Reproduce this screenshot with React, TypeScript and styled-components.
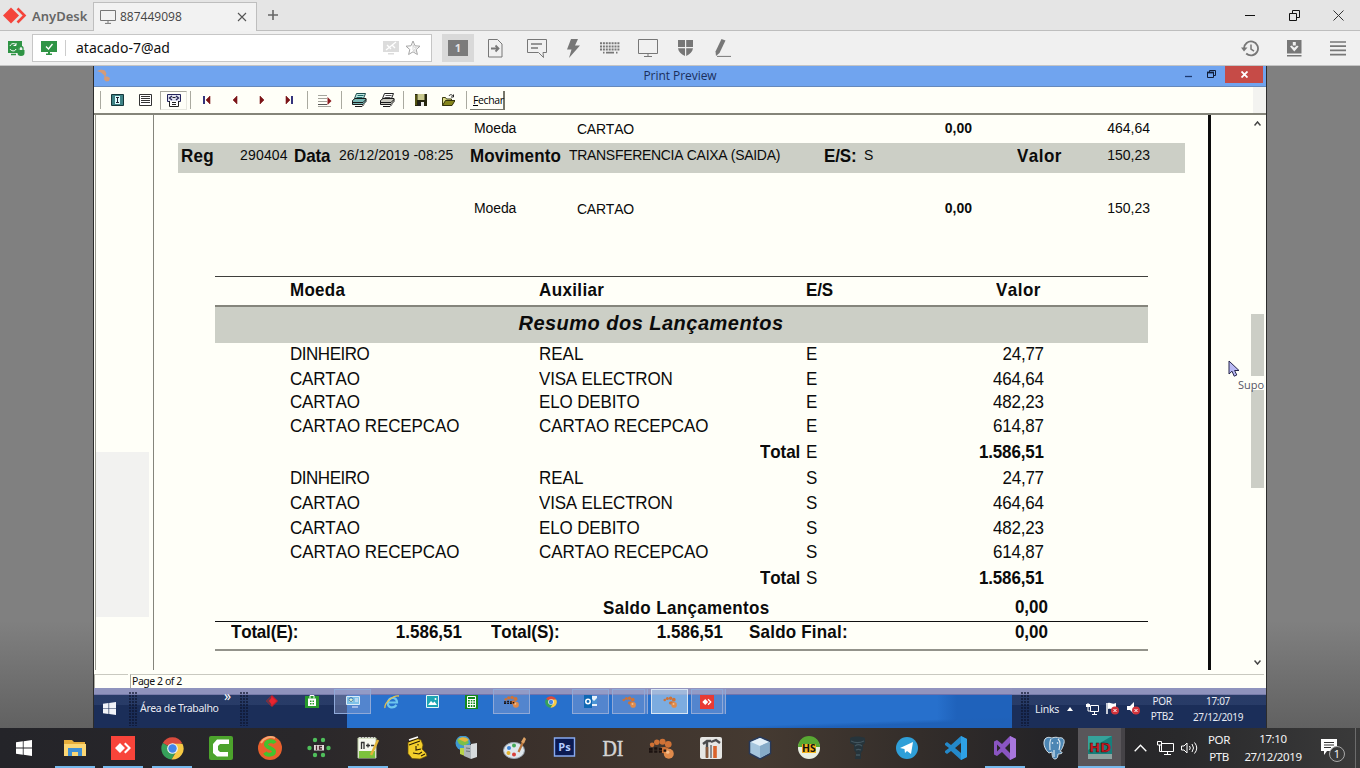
import React from "react";
import styled, { createGlobalStyle, css } from "styled-components";

const ui = `"Noto Sans", "Open Sans", sans-serif`;
const arial = `"Liberation Sans", Arial, sans-serif`;

const Global = createGlobalStyle`
  * { box-sizing: border-box; }
  body { margin: 0; background: #808080; overflow: hidden; }
  svg { display: block; flex: none; }
`;

const Screen = styled.div`
  width: 1360px;
  height: 768px;
  display: flex;
  flex-direction: column;
  overflow: hidden;
  font-family: ${ui};
  color: #222;
`;

/* ---------- AnyDesk chrome ---------- */
const TitleBar = styled.header`
  height: 31px;
  flex: none;
  display: flex;
  background: #e5e5e5;
  border-bottom: 1px solid #bebebe;
`;
const Brand = styled.div`
  width: 93px;
  display: flex;
  align-items: center;
  padding: 1px 0 0 3px;
  gap: 5px;
  font-size: 13px;
  font-weight: 600;
  color: #666;
  white-space: nowrap;
`;
const Tab = styled.div`
  width: 164px;
  height: 29px;
  margin-top: 2px;
  display: flex;
  align-items: center;
  padding: 0 9px 1px 6px;
  background: #f2f2f2;
  border: 1px solid #bebebe;
  border-bottom: 0;
  font: 12px "Open Sans", sans-serif;
  color: #444;
`;
const TabLabel = styled.span`
  flex: 1;
  margin-left: 4px;
`;
const NewTab = styled.div`
  width: 32px;
  display: flex;
  align-items: center;
  justify-content: center;
`;
const WindowButtons = styled.div`
  margin-left: auto;
  display: flex;
  align-items: center;
  gap: 33px;
  padding-right: 16px;
`;
const NavBar = styled.div`
  height: 35px;
  flex: none;
  display: flex;
  align-items: center;
  background: #f0f0f0;
  border-bottom: 1px solid #c4c4c4;
`;
const SessionIcon = styled.div`
  width: 32px;
  padding-left: 8px;
`;
const Address = styled.div`
  width: 400px;
  height: 28px;
  display: flex;
  align-items: center;
  background: #fff;
  border: 1px solid #c6c6c6;
  padding: 0 10px 0 8px;
  gap: 6px;
`;
const AddressText = styled.span`
  flex: 1;
  border-left: 1px solid #ccc;
  margin-left: 2px;
  padding-left: 10px;
  line-height: 16px;
  font-size: 14px;
  color: #111;
`;
const Actions = styled.div`
  display: flex;
  align-items: center;
  margin-left: 10px;
`;
const Action = styled.div<{ $w: number; $on?: boolean }>`
  width: ${(p) => p.$w}px;
  height: 28px;
  display: flex;
  align-items: center;
  justify-content: center;
  background: ${(p) => (p.$on ? "#d9d9d9" : "none")};
`;
const MonitorBadge = styled.span`
  width: 20px;
  height: 16px;
  background: #7b7b7b;
  color: #e4e4e4;
  font-size: 11px;
  font-weight: 700;
  line-height: 16px;
  text-align: center;
`;
const RightActions = styled.div`
  margin-left: auto;
  display: flex;
  align-items: center;
  gap: 28px;
  padding-right: 14px;
`;

/* ---------- Remote desktop ---------- */
const Stage = styled.main`
  height: 662px;
  flex: none;
  display: flex;
  padding-left: 93px;
  background: linear-gradient(#808080 0, #808080 555px, #616161 662px);
`;
const Remote = styled.div`
  position: relative;
  width: 1174px;
  border: solid #2c2c2c;
  border-width: 0 1px;
  display: flex;
  flex-direction: column;
  background: #fffff8;
`;
const AppTitle = styled.div`
  height: 21px;
  flex: none;
  display: flex;
  background: #70a4ef;
  border-bottom: 1px solid #6689bb;
  padding: 0 3px 0 2px;
`;
const AppTitleText = styled.div`
  flex: 1;
  padding-left: 86px;
  text-align: center;
  font: 12px/20px "Open Sans", sans-serif;
  letter-spacing: -0.05px;
  color: #1b2f5c;
`;
const AppTitleButtons = styled.div`
  display: flex;
  align-items: flex-start;
`;
const AppClose = styled.div`
  width: 38px;
  height: 17px;
  display: flex;
  align-items: center;
  justify-content: center;
  background: #c64b47;
`;
const ToolRow = styled.div`
  height: 28px;
  flex: none;
  display: flex;
  align-items: center;
  border-bottom: 2px solid #85857a;
  padding-left: 6px;
`;
const ToolSep = styled.i`
  width: 1px;
  height: 18px;
  background: #aaaaa0;
`;
const Tool = styled.div<{ $w: number; $pressed?: boolean }>`
  width: ${(p) => p.$w}px;
  height: 19px;
  display: flex;
  align-items: center;
  justify-content: center;
  ${(p) =>
    p.$pressed &&
    css`
      border: 1px solid #aaaaa0;
      border-right-color: #e8e8e0;
      border-bottom-color: #e8e8e0;
    `}
`;
const Gap = styled.i<{ $w: number }>`
  width: ${(p) => p.$w}px;
  flex: none;
`;
const CloseButton = styled.div`
  width: 35px;
  height: 19px;
  margin-left: 3px;
  border-right: 2px solid #77776a;
  border-bottom: 1px solid #77776a;
  font: 10.5px/19px "Open Sans", sans-serif;
  letter-spacing: -0.4px;
  padding-left: 3px;
  color: #000;
  white-space: nowrap;
`;
const ScrollCorner = styled.div`
  width: 13px;
  height: 26px;
  margin-left: auto;
  background: #f3f3f0;
`;

const Viewport = styled.div`
  height: 555px;
  flex: none;
  display: flex;
  margin-left: 1px;
  border-left: 1px solid #999990;
`;
const Gutter = styled.div`
  width: 57px;
  padding-top: 337px;
`;
const GutterPanel = styled.div`
  width: 53px;
  height: 165px;
  background: #f2f2f0;
`;
const Paper = styled.section`
  width: 1058px;
  border-left: 1px solid #85857c;
  border-right: 3px solid #0c0c0c;
  font-family: ${arial};
  color: #0b0b0b;
`;
const ScrollBar = styled.div`
  flex: 1;
  display: flex;
  flex-direction: column;
  align-items: flex-end;
  padding: 4px 2px 3px 0;
`;
const ScrollArrow = styled.div`
  width: 14px;
  height: 9px;
  display: flex;
  align-items: center;
  justify-content: center;
`;
const Thumb = styled.div`
  width: 13px;
  height: 174px;
  margin: 186px 0 auto;
  background: linear-gradient(#cccec6 0 62px, #fffff8 62px 76px, #cccec6 76px);
`;

const Detail = styled.div<{ $h: number }>`
  height: ${(p) => p.$h}px;
  display: grid;
  grid-template-columns: 103px 268px 127px 178px;
  padding-left: 320px;
  line-height: 26px;
`;
const RecordBand = styled.div`
  height: 30px;
  width: 1007px;
  margin-left: 24px;
  padding-left: 3px;
  display: grid;
  grid-template-columns: 59px 54px 45px 131px 99px 255px 40px 153px 50px 83px;
  background: #cccfc6;
  line-height: 26px;
  white-space: nowrap;
`;
const BlankBand = styled.div`
  height: 22px;
`;
/* The report face is slightly condensed, so each text is set larger and squeezed. */
const Txt = styled.span<{ $b?: boolean; $s?: number; $ls?: number; $right?: boolean; $dy?: number }>`
  font-weight: ${(p) => (p.$b ? 700 : 400)};
  font-size: ${(p) => (p.$s ?? 17) * 1.06}px;
  letter-spacing: ${(p) => p.$ls ?? 0}px;
  text-align: ${(p) => (p.$right ? "right" : "left")};
  margin-top: ${(p) => p.$dy ?? 0}px;
  transform: scaleX(0.9434);
  transform-origin: ${(p) => (p.$right ? "100% 50%" : "0 50%")};
  font-kerning: none;
  white-space: nowrap;
`;
const Summary = styled.div`
  width: 933px;
  margin: 43px 0 0 61px;
  border-top: 1px solid #3f3f3c;
`;
const SummaryRow = styled.div<{ $h: number }>`
  height: ${(p) => p.$h}px;
  display: grid;
  grid-template-columns: 249px 221px 46px 190px 48px;
  padding-left: 75px;
  line-height: 22px;
`;
const SummaryHead = styled(SummaryRow)`
  grid-template-columns: 249px 267px 190px 48px;
  border-bottom: 2px solid #85857c;
  line-height: 27px;
`;
const SummaryTitle = styled.div`
  height: 36px;
  padding-right: 61px;
  background: #cccfc6;
  font: italic 700 20px/33px ${arial};
  letter-spacing: 0.48px;
  text-align: center;
`;
const BalanceRow = styled.div`
  height: 24px;
  display: grid;
  grid-template-columns: 300px 145px;
  padding-left: 388px;
  line-height: 22px;
`;
const TotalsRow = styled.div`
  height: 30px;
  display: grid;
  grid-template-columns: 130px 101px 29px 130px 102px 26px 150px 149px;
  padding-left: 16px;
  border-top: 1px solid #111;
  border-bottom: 2px solid #93938b;
  line-height: 21px;
`;

const StatusBar = styled.div`
  height: 18px;
  flex: none;
  display: flex;
  padding-top: 4px;
  background: #fffff8;
`;
const StatusCell = styled.div<{ $w?: number }>`
  ${(p) => (p.$w ? `width: ${p.$w}px;` : "flex: 1;")}
  margin-right: 2px;
  border-top: 1px solid #c9c9c0;
  border-left: 1px solid #aaaaa2;
  padding-left: 1px;
  font: 10.5px/13px "Noto Sans", sans-serif;
  letter-spacing: -0.45px;
  color: #111;
`;

const RemoteTaskbar = styled.div`
  height: 40px;
  flex: none;
  display: flex;
  background: linear-gradient(#8f93bd 0 6px, #777baa 6px 7px, rgba(60, 80, 125, 0.4) 7px 17px, transparent 17px),
    linear-gradient(#1b2e59, #1b2e59);
  color: #e8ebf3;
  font-size: 11px;
`;
const RemoteStart = styled.div`
  width: 35px;
  padding: 14px 0 0 9px;
`;
const Grip = styled.i<{ $ml?: number }>`
  width: 8px;
  height: 34px;
  margin: 4px 0 0 ${(p) => p.$ml ?? 0}px;
  background: radial-gradient(circle at 1px 1px, #0c142c 0.6px, transparent 0.9px) 0 0 / 3px 3px;
`;
const DeskLabel = styled.div`
  width: 81px;
  padding-left: 3px;
  font-size: 10.5px;
  line-height: 40px;
  letter-spacing: -0.32px;
  white-space: nowrap;
`;
const More = styled.div`
  width: 23px;
  padding-left: 6px;
  font-size: 14px;
  line-height: 15px;
  color: #fff;
`;
const RemoteIcons = styled.div`
  width: 99px;
  height: 26px;
  display: flex;
  align-items: center;
  gap: 26px;
  padding-left: 17px;
`;
const RemoteApps = styled.div`
  width: 665px;
  display: flex;
  align-items: flex-start;
  background: linear-gradient(#9294be 0 6px, #7073ae 6px 7px, transparent 7px),
    linear-gradient(178deg, transparent 0 82%, #1f61b8 88%),
    linear-gradient(90deg, #2770cc 0 590px, #1f62bb 610px);
`;
const RemoteApp = styled.div<{ $w: number; $kind?: "open" | "active"; $pull?: boolean }>`
  width: ${(p) => p.$w}px;
  height: 25px;
  margin: 1px 0 0 ${(p) => (p.$pull ? -13 : 0)}px;
  display: flex;
  align-items: center;
  justify-content: center;
  ${(p) =>
    p.$kind &&
    css`
      border: 1px solid ${p.$kind === "active" ? "#d7e5f4" : "#8fa9d8"};
      background: ${p.$kind === "active" ? "rgba(170,205,235,.65)" : "rgba(150,165,210,.4)"};
    `}
`;
const StackEdge = styled.i`
  width: 3px;
  height: 25px;
  margin: 1px 3px 0 0;
  border-right: 1px solid #8fa9d8;
  background: rgba(150, 165, 210, 0.4);
`;
const RemoteTray = styled.div`
  flex: 1;
  display: flex;
  align-items: center;
  padding: 1px 0 0 6px;
  font-size: 10.5px;
`;
const Clock = styled.div<{ $w: number; $lh: number; $s: number; $ls?: number }>`
  width: ${(p) => p.$w}px;
  text-align: center;
  font-size: ${(p) => p.$s}px;
  line-height: ${(p) => p.$lh}px;
  letter-spacing: ${(p) => p.$ls ?? -0.3}px;
  white-space: nowrap;
`;
const Pointer = styled.div`
  position: absolute;
  left: 1134px;
  top: 294px;
`;
const PointerLabel = styled.div`
  position: absolute;
  left: 1144px;
  top: 311px;
  width: 28px;
  overflow: hidden;
  font: 11px/16px "Open Sans", sans-serif;
  color: #555566;
`;

/* ---------- Host taskbar ---------- */
const Taskbar = styled.footer`
  height: 40px;
  flex: none;
  display: flex;
  background: linear-gradient(90deg, #242429 0, #29272a 300px, #3a302b 520px, #453a31 760px, #332d2a 920px, #252427 1040px, #29292b 1180px, #3a3a3a 1360px);
  color: #f4f4f4;
`;
const StartSlot = styled.div`
  width: 50px;
  display: flex;
  align-items: center;
  padding-left: 16px;
`;
const Slot = styled.div<{ $run?: boolean; $active?: boolean }>`
  width: 49px;
  margin-right: -0.05px;
  display: flex;
  flex: none;
  align-items: center;
  justify-content: center;
  ${(p) =>
    p.$active &&
    css`
      width: 47px;
      background: linear-gradient(90deg, #59565a 43px, #454347 43px);
      padding-right: 3px;
      border-bottom: 2px solid #76b9ed;
    `}
  ${(p) =>
    p.$run &&
    css`
      background: linear-gradient(#76b9ed, #76b9ed) 50% 100% / 40px 2px no-repeat;
    `}
`;
const HostTray = styled.div<{ $ml?: number }>`
  display: flex;
  align-items: center;
  margin-left: ${(p) => p.$ml ?? 0}px;
`;
const TrayIcon = styled.div<{ $w: number }>`
  width: ${(p) => p.$w}px;
`;
const Notice = styled.div`
  padding-top: 5px;
`;
const PeekEdge = styled.i`
  width: 1px;
  height: 40px;
  margin: 0 4px 0 auto;
  background: #6c6c6c;
`;

/* ---------- Drawings ---------- */
type SP = { w: number; h: number; vb?: string; children: React.ReactNode };
const S = ({ w, h, vb, children }: SP) => (
  <svg width={w} height={h} viewBox={vb ?? `0 0 ${w} ${h}`} fill="none">
    {children}
  </svg>
);
const Monitor = ({ w = 16, h = 14, c = "#777" }: { w?: number; h?: number; c?: string }) => (
  <S w={w} h={h} vb="0 0 16 14">
    <path d="M.5.5h15v10H.5zM8 10.5v2.5M5 13.4h6" stroke={c} />
  </S>
);
const WinLogo = ({ s, c = "#fff" }: { s: number; c?: string }) => (
  <S w={s} h={s} vb="0 0 16 16">
    <path d="M0 2.3 6.8 1.3v6.3H0zM7.6 1.2 16 0v7.6H7.6zM0 8.4h6.8v6.3L0 13.7zM7.6 8.4H16V16l-8.4-1.2z" fill={c} />
  </S>
);
const Chrome = ({ s }: { s: number }) => (
  <S w={s} h={s} vb="0 0 24 24">
    <path d="M12 12 1.9 6.2A11.5 11.5 0 0 1 22 6.2z" fill="#d94b3d" />
    <path d="M12 12 1.9 6.2A11.5 11.5 0 0 0 11 23.5l5-9z" fill="#36a05a" />
    <path d="M12 7h10.4A11.5 11.5 0 0 1 11 23.5l5.3-9z" fill="#f6c944" />
    <circle cx="12" cy="12" r="5.6" fill="#f2f2f2" />
    <circle cx="12" cy="12" r="4.4" fill="#4285e8" />
  </S>
);
const AnyMark = ({ s, bg }: { s: number; bg: string }) => (
  <S w={s} h={s} vb="0 0 24 24">
    <path d="M0 0h24v24H0z" fill={bg} />
    <path d="m9 7 5 5-5 5-5-5zM13 8l1.500-1.500L20 12l-5.500 5.500L13 16l4-4z" fill="#fff" />
  </S>
);
const Foot = ({ s, dark }: { s: number; dark?: boolean }) => (
  <S w={s} h={s} vb="0 0 24 24">
    <g fill="#cf7236">
      <circle cx="3" cy="8.500" r="2.200" />
      <circle cx="7.500" cy="6" r="2.600" />
      <circle cx="13" cy="5.500" r="2.900" />
      <circle cx="18.500" cy="8" r="3.200" />
      <ellipse cx="14.500" cy="13.500" rx="4.500" ry="3" />
    </g>
    <circle cx="19" cy="17" r="4.800" fill="#df8a4b" />
    <circle cx="18" cy="15.500" r="1.600" fill="#f3bd8c" />
    {dark && <path d="M0 12.500h3.500M0 15h3.500M5 12h3M5 15h3M9.500 12.500h3M9.500 15h3M14 14h2.500" stroke="#1b1210" strokeWidth="2.200" />}
  </S>
);
const Arrow = ({ dir, bar }: { dir: 1 | -1; bar?: boolean }) => (
  <S w={11} h={10}>
    <g transform={dir === 1 ? undefined : "translate(11 0) scale(-1 1)"}>
      <path d="M3 1v8l4-4z" fill="#7c1518" stroke="#7c1518" strokeWidth=".6" />
      {bar && <path d="M9 1v8" stroke="#1d1d6e" strokeWidth="1.800" />}
    </g>
  </S>
);
const Printer = ({ teal }: { teal?: boolean }) => (
  <S w={15} h={14}>
    <path d="M4.500.500h9l-2 5h-9z" fill={teal ? "#bfe6e2" : "#fff"} stroke={teal ? "#1d4d4c" : "#222"} />
    <path d="M5.500 2.500h6M4.500 4.500h6" stroke={teal ? "#1d6a68" : "#555"} />
    <path d="m.500 7.500 2.500-2h11v3l-3 3H.500z" fill={teal ? "#79b8b4" : "#c8c8be"} stroke="#1a1a1a" />
    <path d="M1 9.500h10l3-3M3 13.500h7l2-2" stroke="#1a1a1a" />
  </S>
);

const hostApps: { run?: boolean; icon: React.ReactNode }[] = [
  {
    run: true,
    icon: (
      <S w={24} h={24}>
        <path d="M1 4h8l2 2h11v14H1z" fill="#e6ae3c" />
        <path d="M1 8h22v12H1z" fill="#fbd774" />
        <path d="M5 12h14v8h-4v-4H9v4H5z" fill="#3f8fd4" />
      </S>
    ),
  },
  { run: true, icon: <AnyMark s={24} bg="#f8443a" /> },
  { run: true, icon: <Chrome s={23} /> },
  {
    icon: (
      <S w={24} h={24}>
        <rect width="24" height="24" rx="2" fill="#4ca32c" />
        <path d="M20 3.500V8h-9l-2 2v4l2 2h8v4.500H8L4 17V8l4-4.500z" fill="#fff" />
      </S>
    ),
  },
  {
    icon: (
      <S w={24} h={24}>
        <circle cx="12" cy="12" r="12" fill="#e8602c" />
        <path d="M3 7a11 11 0 0 1 14-5" stroke="#f7a873" strokeWidth="2" />
        <path d="M17 7c-2-3-9-2-9 1.500S16 12 16 15.500 9 20 7 16.500" stroke="#43c22d" strokeWidth="4" />
      </S>
    ),
  },
  {
    icon: (
      <S w={24} h={24}>
        <g fill="#4fbf5b">
          <circle cx="8" cy="4" r="2.200" /><circle cx="16" cy="4" r="2.200" />
          <circle cx="2.500" cy="12" r="2.200" /><circle cx="21.500" cy="12" r="2.200" />
          <circle cx="8" cy="19" r="2.200" /><circle cx="16" cy="19" r="2.200" />
        </g>
        <path d="M7 9h10v5.500H7z" fill="#e5dcdc" />
        <path d="M9.500 9.500V14M15 10.500h-2.500V13H15" stroke="#4b2c34" strokeWidth="1.300" />
      </S>
    ),
  },
  {
    run: true,
    icon: (
      <S w={24} h={24}>
        <path d="M2 2h18v20H2z" fill="#f6f8ee" stroke="#b9c9a4" />
        <path d="M3 15h16v7H3z" fill="#7cc33c" />
        <path d="M5.500 6v7M5 6.500h3V13M10 9.500h4M12 7.500v4M15 9.500h3" stroke="#333" strokeWidth="1.300" />
        <path d="M22 4 15 19" stroke="#e3b53a" strokeWidth="2.500" />
        <path d="M3 1.500h16" stroke="#ccc" strokeDasharray="2 1" />
      </S>
    ),
  },
  {
    icon: (
      <S w={24} h={24}>
        <path d="m3 6 8-4 5 2 2 5-1 4 4 4 1 3-7 3-8-.500-4-5V11z" fill="#f4cf2b" stroke="#6b5208" strokeWidth=".7" />
        <path d="m3 6 10-3.500M4 9l11-4M11 10v4l5-1M8 17l6 1 3-2M13 8v1.500M16 20l4-2" stroke="#2a1e06" strokeWidth="1.100" />
        <path d="m4 4 9-3" stroke="#fff" strokeWidth="1.600" />
      </S>
    ),
  },
  {
    icon: (
      <S w={24} h={24}>
        <circle cx="9" cy="7" r="7.500" fill="#3e98d2" />
        <path d="M3 4c4-3 7 1 10-1l2 4-5 3-5-2z" fill="#7bc04a" />
        <path d="M4 3c4-3 9-2 11 1l-4 2z" fill="#e5b53c" />
        <path d="M6 12h5v8l-5-2z" fill="#b9d44a" />
        <path d="M10 9h7v14l-7-3z" fill="#aeb5ba" />
        <path d="m17 8 6-1v14l-6 2z" fill="#d7dbdd" />
        <path d="m12 12 4 .500M12 15l4 .500" stroke="#6c767c" />
      </S>
    ),
  },
  {
    icon: (
      <S w={24} h={24}>
        <ellipse cx="11" cy="14.500" rx="10.500" ry="8" fill="#dfe6ec" stroke="#9aa7b3" />
        <circle cx="6" cy="12" r="2" fill="#3c84d6" /><circle cx="11" cy="9.500" r="2" fill="#45ab58" />
        <circle cx="5.500" cy="17" r="2" fill="#e2b330" /><circle cx="11" cy="18.500" r="2" fill="#d8403a" />
        <path d="m20.500 5-5 11" stroke="#b9763c" strokeWidth="2.200" />
        <path d="m18 6 3-5 2 2-2 4.500z" fill="#e0a365" />
      </S>
    ),
  },
  {
    icon: (
      <S w={24} h={24}>
        <path d="M2.500 2h20v18h-20z" fill="#0b1a52" stroke="#86a9f0" strokeWidth="1.400" />
        <text x="12.500" y="15" textAnchor="middle" fontFamily="Open Sans, sans-serif" fontWeight="700" fontSize="11" fill="#b5ccff">Ps</text>
      </S>
    ),
  },
  {
    icon: (
      <S w={30} h={34}>
        <text x="15" y="25" textAnchor="middle" fontFamily="Liberation Serif, serif" fontSize="24" textLength="21" lengthAdjust="spacingAndGlyphs" fill="#d4d4d4" stroke="#d4d4d4" strokeWidth=".5">DI</text>
      </S>
    ),
  },
  { icon: <Foot s={25} dark /> },
  {
    icon: (
      <S w={24} h={24}>
        <rect x="1" y="1" width="22" height="22" rx="2" fill="#e6e6e4" />
        <path d="m4 8 4-3h4M8 5v16M12 6l5-2 4 3" stroke="#4b4b4d" strokeWidth="2.400" />
        <path d="M16 10v12" stroke="#d9622b" strokeWidth="3.600" />
        <path d="M8 11v11" stroke="#8b5a3c" strokeWidth="2.600" />
        <path d="M12 9v13" stroke="#77777a" strokeWidth="1.600" />
      </S>
    ),
  },
  {
    icon: (
      <S w={24} h={24}>
        <path d="m12 1 10.500 4.500v12L12 23 1.500 17.500v-12z" fill="#a5c5dd" stroke="#27395a" strokeWidth="1.500" />
        <path d="m12 2 9 4-9 4-9-4z" fill="#e4f0f8" />
        <path d="M12 10v12l9-5V6z" fill="#86abc8" />
      </S>
    ),
  },
  {
    icon: (
      <S w={24} h={24}>
        <circle cx="12" cy="12" r="11" fill="#e9efe2" />
        <path d="M1 11a11 11 0 0 1 22 0z" fill="#58a832" />
        <path d="M5 8h14v9H5z" fill="#f4b520" />
        <text x="12" y="16" textAnchor="middle" fontFamily="Open Sans, sans-serif" fontWeight="700" fontSize="10.500" fill="#111">HS</text>
      </S>
    ),
  },
  {
    icon: (
      <S w={24} h={24}>
        <path d="M4 2c4-2 10-2 15 0v5l-2 2v5l-2 3v6H9l1-6-2-3V9L4 7z" fill="#26343b" />
        <path d="M5 5c4 2 9 2 13 0M9 10c2-1.500 5-1.500 7 0M10 14c1.500-1 3-1 5 0M10 19h4" stroke="#43565f" strokeWidth="1.300" />
      </S>
    ),
  },
  {
    icon: (
      <S w={24} h={24}>
        <circle cx="12" cy="12" r="11" fill="#2f9fd8" />
        <path d="m5 12 13-6-2 12-4-3-2 2-.500-4L5 12z" fill="#fff" />
      </S>
    ),
  },
  {
    icon: (
      <S w={24} h={24}>
        <path d="m17 0 6 3v18l-6 3-10-9-4 3-2-1.500V15l4-3-4-3V7.500L3 6l4 3zM17 7l-6 5 6 5z" fill="#2489ca" fillRule="evenodd" />
        <path d="m17 0 6 3v18l-6 3z" fill="#2ea1e6" />
      </S>
    ),
  },
  {
    run: true,
    icon: (
      <S w={24} h={24}>
        <path d="m17 0 6 3v18l-6 3-8-8-5 4-3-1.500v-13L4 4l5 4zM17 7l-5 5 5 5zM4 8.500v7L7.500 12z" fill="#8a55c2" fillRule="evenodd" />
        <path d="m17 0 6 3v18l-6 3z" fill="#a877dd" />
      </S>
    ),
  },
  {
    icon: (
      <S w={24} h={24}>
        <path d="M3 3c3-3 6-1 7-1 3-1 5-1 7 0 3-1 6 1 5 5s-3 8-4 8c-1 0 3 1 2 2s-4 1-4 1c0 3-1 5-3 5s-3-2-3-7l-3 1C4 15 0 8 3 3z" fill="#4c86b4" stroke="#d6e2ea" />
        <path d="M9 3c-2 3-1 7-1 11M16 3c3 3 2 6 1 11M12 14v7" stroke="#e3edf3" strokeWidth="1.100" />
        <circle cx="10.500" cy="7" r=".8" fill="#fff" /><circle cx="15.500" cy="7" r=".8" fill="#fff" />
      </S>
    ),
  },
];

const entries: [string, string, string, string, number][] = [
  ["DINHEIRO", "REAL", "E", "24,77", 25],
  ["CARTAO", "VISA ELECTRON", "E", "464,64", 23],
  ["CARTAO", "ELO DEBITO", "E", "482,23", 24],
  ["CARTAO RECEPCAO", "CARTAO RECEPCAO", "E", "614,87", 26],
  ["", "", "E", "1.586,51", 26],
  ["DINHEIRO", "REAL", "S", "24,77", 25],
  ["CARTAO", "VISA ELECTRON", "S", "464,64", 25],
  ["CARTAO", "ELO DEBITO", "S", "482,23", 24],
  ["CARTAO RECEPCAO", "CARTAO RECEPCAO", "S", "614,87", 26],
  ["", "", "S", "1.586,51", 30],
];
const spacing: Record<string, number> = {
  DINHEIRO: -0.5,
  CARTAO: -0.2,
  REAL: 0,
  "VISA ELECTRON": -0.2,
  "ELO DEBITO": -0.15,
  "CARTAO RECEPCAO": -0.12,
};

const DetailLine = ({ h, value }: { h: number; value: string }) => (
  <Detail $h={h}>
    <Txt $s={14} $ls={-0.1}>Moeda</Txt>
    <Txt $s={14} $ls={-0.25} $dy={1}>CARTAO</Txt>
    <Txt $s={14} $b $right>0,00</Txt>
    <Txt $s={14} $right>{value}</Txt>
  </Detail>
);

export default function App() {
  return (
    <Screen>
      <Global />
      <TitleBar>
        <Brand>
          <S w={24} h={17}>
            <path d="m8 .500 8 8-8 8-8-8z" fill="#f4443b" />
            <path d="m14.500 1.500 7 7-7 7" stroke="#f4443b" strokeWidth="2.600" />
          </S>
          AnyDesk
        </Brand>
        <Tab>
          <Monitor />
          <TabLabel>887449098</TabLabel>
          <S w={10} h={10}><path d="m1 1 8 8M9 1 1 9" stroke="#555" strokeWidth="1.100" /></S>
        </Tab>
        <NewTab><S w={10} h={10}><path d="M5 0v10M0 5h10" stroke="#666" strokeWidth="1.600" /></S></NewTab>
        <WindowButtons>
          <S w={11} h={11}><path d="M0 5.500h10" stroke="#111" /></S>
          <S w={11} h={11}><path d="M.500 3.500h7v7h-7zM3.500 3.500v-3h7v7h-3" stroke="#111" /></S>
          <S w={11} h={11}><path d="m.500.500 10 10M10.500.500l-10 10" stroke="#333" /></S>
        </WindowButtons>
      </TitleBar>
      <NavBar>
        <SessionIcon>
          <S w={17} h={15}>
            <path d="M0 0h14v5l-3 1-1 6H0z" fill="#2f9445" />
            <path d="M2 5c1-3 5-3 6-1M8 2v2.500H5.500M8 8c-1 3-5 2-6 0" stroke="#fff" />
            <path d="M9.500 9h7v3a3.500 3 0 0 1-7 0z" fill="#2f9445" />
            <path d="M11 9V7.500a2 2 0 0 1 4 0V9M3 13.500h5" stroke="#2f9445" strokeWidth="1.300" />
          </S>
        </SessionIcon>
        <Address>
          <S w={16} h={14}>
            <path d="M0 0h16v11H0zM5 12.500h6V14H5zM7 11h2v2H7z" fill="#2f9445" />
            <path d="m5 5.500 2.500 2.500L11.500 3" stroke="#fff" strokeWidth="1.300" />
          </S>
          <AddressText>atacado-7@ad</AddressText>
          <S w={16} h={14}>
            <path d="M0 0h16v11H0zM5 12h6v1.500H5z" fill="#dcdcdc" />
            <path d="m3 9 10-8M4 4l4 4M9 4l3 3" stroke="#fff" strokeWidth="1.300" />
          </S>
          <S w={16} h={16}>
            <path d="m8 1 2 4.800 5 .400-3.800 3.300 1.200 5L8 11.800 3.600 14.500l1.200-5L1 6.200l5-.400z" stroke="#a5a5a5" />
            <path d="m8 4.500 1 2.700 2.600.200-2 1.700.700 2.500L8 10.200z" stroke="#c8c8c8" strokeWidth=".7" />
          </S>
        </Address>
        <Actions>
          <Action $w={32} $on><MonitorBadge>1</MonitorBadge></Action>
          <Action $w={43}>
            <S w={15} h={19}><path d="M.500.500h9l4.500 4.500v13H.500z" stroke="#777" /><path d="M3 9.500h7M7.500 6.500l3 3-3 3" stroke="#777" strokeWidth="1.800" /></S>
          </Action>
          <Action $w={40}>
            <S w={20} h={19}><path d="M.500.500h19v13h-3.500l.500 5-5-5H.500z" stroke="#777" /><path d="M4 5h11M4 9h7" stroke="#777" strokeWidth="1.300" /></S>
          </Action>
          <Action $w={32}>
            <S w={13} h={19}><path d="M4 0h7L8 6.500h5L2 19l2.500-8.500H0z" fill="#777" /></S>
          </Action>
          <Action $w={42}>
            <S w={20} h={12}>
              <path d="M0 1.200h20M0 4.400h20M0 7.600h20" stroke="#777" strokeWidth="2" strokeDasharray="2 .9" />
              <path d="M3 10.700h1.500M6 10.700h8M16 10.700h1.500" stroke="#777" strokeWidth="1.800" />
            </S>
          </Action>
          <Action $w={33}>
            <S w={20} h={18}><path d="M.500.500h19v14H.500zM10 14.500V17M6 17.500h8" stroke="#777" /></S>
          </Action>
          <Action $w={42}>
            <S w={15} h={16}><path d="M0 0h7v7H0zM8.200 0H15v7H8.200zM0 8.200h7V16C3 14 .500 12 0 8.200zM8.200 8.200H15C14.500 12 12 14 8.200 16z" fill="#777" /></S>
          </Action>
          <Action $w={34}>
            <S w={16} h={18}>
              <path d="m6.500 0 4 1.500L4.500 14 1 17l-.500-4.500z" fill="#777" />
              <path d="M2 17.400h14" stroke="#777" />
            </S>
          </Action>
        </Actions>
        <RightActions>
          <S w={18} h={17}>
            <path d="M3 8.500a7 7 0 1 1 2.200 5" stroke="#777" strokeWidth="1.800" />
            <path d="M0 7.500h6.500L3 11.500z" fill="#777" /><path d="M10 4.500V9l3 2.200" stroke="#777" strokeWidth="1.500" />
          </S>
          <S w={15} h={17}>
            <path d="M0 0h14.500v13.500H0zM0 15h14.500v1.500H0z" fill="#777" />
            <path d="M5.800 2h3v3.500h-3zM3 6.500l1.500-1 2.800 2.200L10 5.500l1.600 1-4.300 5z" fill="#f0f0f0" />
          </S>
          <S w={16} h={15}><path d="M0 1h16M0 5.200h16M0 9.400h16M0 13.600h16" stroke="#777" strokeWidth="1.700" /></S>
        </RightActions>
      </NavBar>

      <Stage>
        <Remote>
          <AppTitle>
            <S w={15} h={16}><path d="m1 5 4-1.500 4 1 1.500 3-1 3h2l2.500 1.500-1 3-3 .500-2-2 .500-4L5 6.500z" fill="#d49b77" /></S>
            <AppTitleText>Print Preview</AppTitleText>
            <AppTitleButtons>
              <S w={62} h={18}>
                <path d="M22 10.500h7" stroke="#1d3a70" strokeWidth="1.300" />
                <path d="M44.500 6.500h6v5h-6zM46.500 6V4.500h6v5H51" stroke="#111e38" />
                <path d="M44 6.500h7" stroke="#111e38" strokeWidth="1.800" />
              </S>
              <AppClose><S w={7} h={7}><path d="m.500.500 6 6M6.500.500l-6 6" stroke="#fff" strokeWidth="1.800" /></S></AppClose>
            </AppTitleButtons>
          </AppTitle>
          <ToolRow>
            <ToolSep />
            <Tool $w={33}>
              <S w={13} h={12}><path d="M.500.500h12v11H.500z" fill="#3f8385" stroke="#16383a" /><path d="M4 2h5v8H4z" fill="#dff" /><path d="M5 3.500h3M5 8.500h3M6.500 3.500v5" stroke="#223" /></S>
            </Tool>
            <Tool $w={22}>
              <S w={13} h={12}><path d="M.500.500h12v11H.500z" fill="#fff" stroke="#333" /><path d="M2 2.500h9M2 4.500h9M2 6.500h9M2 8.500h9" stroke="#333" /></S>
            </Tool>
            <Gap $w={4} />
            <Tool $w={27} $pressed>
              <S w={14} h={13}><path d="M.500.500h13v7h-13z" fill="#dfe2f2" stroke="#24245c" /><path d="M2.500 7v5.500h9V7" fill="#fff" stroke="#222" /><path d="m5 2-2.500 2L5 6M9 2l2.500 2L9 6" stroke="#222253" strokeWidth="1.300" /><path d="M5.500 3.500h3M5 8.500h4M5 10.500h4" stroke="#222" /></S>
            </Tool>
            <Gap $w={3} />
            <ToolSep />
            <Tool $w={33}><Arrow dir={-1} bar /></Tool>
            <Tool $w={20}><Arrow dir={-1} /></Tool>
            <Tool $w={36}><Arrow dir={1} /></Tool>
            <Tool $w={17}><Arrow dir={1} bar /></Tool>
            <Gap $w={10} />
            <ToolSep />
            <Tool $w={33}>
              <S w={14} h={13}><path d="M0 1.500h9M0 4.500h9M0 7.500h9M0 12.500h13" stroke="#a5a59d" /><path d="M0 10.500h9" stroke="#555" /><path d="M9.500 3v8l4-4z" fill="#8d1c20" /></S>
            </Tool>
            <ToolSep />
            <Tool $w={34}><Printer teal /></Tool>
            <Tool $w={22}><Printer /></Tool>
            <Gap $w={5} />
            <ToolSep />
            <Tool $w={34}>
              <S w={12} h={12}><path d="M0 0h12v12H0z" fill="#26260f" /><path d="M2.500 0h7v6h-7z" fill="#c9c98e" /><path d="M3 8h6v4H3z" fill="#eee" /><path d="M3 8h3v4H3z" fill="#222" /><path d="M1 1v10" stroke="#7d7d16" /></S>
            </Tool>
            <Tool $w={20}>
              <S w={13} h={12}><path d="M.500 11.500v-8h3l1 1.500h5v2" fill="#dcdc8a" stroke="#3c3c10" /><path d="m.500 11.500 3-5H13l-3 5z" fill="#85851c" stroke="#33330c" /><path d="M7 2c1-2 3-1.500 4 0M11.500.500V3H9" stroke="#222" /></S>
            </Tool>
            <Gap $w={8} />
            <ToolSep />
            <CloseButton><u>F</u>echar</CloseButton>
            <ScrollCorner />
          </ToolRow>

          <Viewport>
            <Gutter><GutterPanel /></Gutter>
            <Paper>
              <DetailLine h={28} value="464,64" />
              <RecordBand>
                <Txt $b $ls={0.3}>Reg</Txt>
                <Txt $s={14} $ls={0.2} $dy={-1}>290404</Txt>
                <Txt $b $ls={-0.1}>Data</Txt>
                <Txt $s={14} $ls={0.05} $dy={-1}>26/12/2019 -08:25</Txt>
                <Txt $b $ls={0.15}>Movimento</Txt>
                <Txt $s={14} $ls={-0.32} $dy={-1}>TRANSFERENCIA CAIXA (SAIDA)</Txt>
                <Txt $b $ls={-0.1}>E/S:</Txt>
                <Txt $s={14} $dy={-1}>S</Txt>
                <Txt $b $ls={0.5}>Valor</Txt>
                <Txt $s={14} $right $dy={-1}>150,23</Txt>
              </RecordBand>
              <BlankBand />
              <DetailLine h={38} value="150,23" />
              <Summary>
                <SummaryHead $h={30}>
                  <Txt $b $ls={0.3}>Moeda</Txt>
                  <Txt $b $ls={0.4}>Auxiliar</Txt>
                  <Txt $b $ls={-0.2}>E/S</Txt>
                  <Txt $b $ls={0.5}>Valor</Txt>
                </SummaryHead>
                <SummaryTitle>Resumo dos Lançamentos</SummaryTitle>
                {entries.map(([moeda, aux, es, valor, h], i) => (
                  <SummaryRow $h={h} key={i}>
                    <Txt $ls={spacing[moeda]}>{moeda}</Txt>
                    <Txt $ls={spacing[aux]}>{aux}</Txt>
                    <Txt $b $ls={-0.1}>{moeda ? "" : "Total"}</Txt>
                    <Txt>{es}</Txt>
                    <AmountCell>
                      <Txt $right $b={!moeda} $ls={moeda ? -0.25 : -0.15}>{valor}</Txt>
                    </AmountCell>
                  </SummaryRow>
                ))}
                <BalanceRow>
                  <Txt $b $ls={0.38}>Saldo Lançamentos</Txt>
                  <Txt $b $right $dy={-1}>0,00</Txt>
                </BalanceRow>
                <TotalsRow>
                  <Txt $b $ls={-0.2}>Total(E):</Txt>
                  <Txt $b $right>1.586,51</Txt>
                  <i />
                  <Txt $b $ls={-0.05}>Total(S):</Txt>
                  <Txt $b $right>1.586,51</Txt>
                  <i />
                  <Txt $b $ls={0.22}>Saldo Final:</Txt>
                  <Txt $b $right>0,00</Txt>
                </TotalsRow>
              </Summary>
            </Paper>
            <ScrollBar>
              <ScrollArrow><S w={7} h={5}><path d="M.500 4.500 3.500 1l3 3.500" stroke="#444" strokeWidth="1.500" /></S></ScrollArrow>
              <Thumb />
              <ScrollArrow><S w={7} h={5}><path d="m.500.500 3 3.500 3-3.500" stroke="#444" strokeWidth="1.500" /></S></ScrollArrow>
            </ScrollBar>
          </Viewport>

          <StatusBar>
            <StatusCell $w={34} />
            <StatusCell>Page 2 of 2</StatusCell>
          </StatusBar>

          <RemoteTaskbar>
            <RemoteStart><WinLogo s={13} c="#f1f3f8" /></RemoteStart>
            <Grip />
            <DeskLabel>Área de Trabalho</DeskLabel>
            <More>»</More>
            <Grip $ml={-1} />
            <RemoteIcons>
              <S w={14} h={14}><path d="m7 1 6 6-6 6-6-6z" fill="#c11f2c" /><path d="M1 7 6 2v10z" fill="#6c3445" /><path d="m7 3 4.500 4L7 11 4 7z" fill="#e92430" /></S>
              <S w={14} h={14}><path d="M0 2h14v12H0z" fill="#279a2c" /><path d="M5 4.500v-3h4v3" stroke="#fff" /><path d="M3 4.500h8v7.500H3z" fill="#fff" /><path d="M5 6.500h1.500V8H5zM7.500 6.500H9V8H7.500zM5 9h1.500v1.500H5zM7.500 9H9v1.500H7.500z" fill="#279a2c" /></S>
            </RemoteIcons>
            <RemoteApps>
              <RemoteApp $w={37} $kind="open" $pull>
                <S w={14} h={13}><path d="M.500 1.500h13v8H.500z" fill="#7fc2e8" stroke="#d9ecf8" /><path d="M3 4h4v3H3z" fill="#dff3cd" /><circle cx="5" cy="4.500" r="2" stroke="#4c7fae" /><path d="M9 4h3M9 6h3M6 12h6" stroke="#eef" /></S>
              </RemoteApp>
              <RemoteApp $w={42}>
                <S w={16} h={16}><path d="M4 8.500h9c0-6-8-6-9 0s6 6 8.500 2.500" stroke="#6ec6ee" strokeWidth="2.200" /><path d="M1 14C0 9 9 1 15 2" stroke="#e5c04e" strokeWidth="1.300" /></S>
              </RemoteApp>
              <RemoteApp $w={38}>
                <S w={13} h={13}><path d="M.500.500h12v12H.500z" fill="#1ea5b4" stroke="#e4f6f8" /><path d="m2 10 3-4 2 2 1.500-1.500L11 10z" fill="#fff" /><circle cx="9.500" cy="4" r="1" fill="#fff" /></S>
              </RemoteApp>
              <RemoteApp $w={40}>
                <S w={13} h={14}><path d="M0 0h13v14H0z" fill="#128a1f" /><path d="M2.500 1.500h8v11h-8z" stroke="#fff" /><path d="M3 4.500h7M3 7h7M3 9.500h7M5.300 5v7M7.800 5v7" stroke="#fff" /></S>
              </RemoteApp>
              <Gap $w={2} />
              <RemoteApp $w={37} $kind="open"><Foot s={15} dark /></RemoteApp>
              <RemoteApp $w={42}><Chrome s={12} /></RemoteApp>
              <RemoteApp $w={37} $kind="open">
                <S w={13} h={13}><path d="M6 1h7v10H6z" fill="#e7f1fa" /><path d="m7 3 3 3 3-3v6H7z" fill="#4a93d4" /><path d="M0 0h8v13H0z" fill="#0f68b4" /><circle cx="4" cy="6.500" r="2.200" stroke="#fff" strokeWidth="1.500" /></S>
              </RemoteApp>
              <Gap $w={3} />
              <RemoteApp $w={33} $kind="open"><Foot s={14} /></RemoteApp>
              <StackEdge />
              <RemoteApp $w={37} $kind="active"><Foot s={14} /></RemoteApp>
              <Gap $w={3} />
              <RemoteApp $w={32} $kind="open"><AnyMark s={14} bg="#e83a35" /></RemoteApp>
              <StackEdge />
            </RemoteApps>
            <Grip $ml={9} />
            <RemoteTray>
              <Clock $w={24} $lh={14} $s={10.5}>Links</Clock>
              <Gap $w={8} />
              <S w={6} h={4}><path d="M0 4 3 0l3 4z" fill="#fff" /></S>
              <Gap $w={13} />
              <S w={13} h={12}><path d="M4.500 2.500h8v6h-8zM8.500 8.500v2.500M6 11.500h5M2 0v8h3" stroke="#fff" /><path d="M0 1h4v3H0z" fill="#fff" /></S>
              <Gap $w={7} />
              <S w={14} h={13}><path d="M1 1v11" stroke="#fff" strokeWidth="1.500" /><path d="M2 1c3-1 4 2 8 0v6C7 8 5 6 2 7z" fill="#fff" /><circle cx="9" cy="8.500" r="4" fill="#d2333a" /><path d="m7.500 7 3 3M10.500 7l-3 3" stroke="#fff" /></S>
              <Gap $w={7} />
              <S w={14} h={13}><path d="M0 4h3l4-4v12L3 8H0z" fill="#fff" /><circle cx="9" cy="8.500" r="4" fill="#d2333a" /><path d="m7.500 7 3 3M10.500 7l-3 3" stroke="#fff" /></S>
              <Gap $w={7} />
              <Clock $w={28} $lh={15} $s={10}>POR<br />PTB2</Clock>
              <Gap $w={15} />
              <Clock $w={54} $lh={16} $s={10}>17:07<br />27/12/2019</Clock>
            </RemoteTray>
          </RemoteTaskbar>

          <Pointer>
            <S w={12} h={18}><path d="M1 1v13l3-2.800 2.200 5 2.600-1.200-2.200-4.500H11z" fill="#b9b9f4" stroke="#26264c" /></S>
          </Pointer>
          <PointerLabel>Supo</PointerLabel>
        </Remote>
      </Stage>

      <Taskbar>
        <StartSlot><WinLogo s={16} /></StartSlot>
        {hostApps.map((app, i) => (
          <Slot key={i} $run={app.run}>{app.icon}</Slot>
        ))}
        <Slot $active>
          <S w={24} h={23}>
            <path d="M0 0h24v23H0z" fill="#17807b" />
            <path d="M0 0h24L0 14z" fill="#35a39b" />
            <path d="M0 18h24v5H0z" fill="#8fa3a0" />
            <text x="12" y="15.500" textAnchor="middle" fontFamily="DejaVu Sans, sans-serif" fontWeight="700" fontSize="12" textLength="22" lengthAdjust="spacingAndGlyphs" fill="#d01921" stroke="#32090c" strokeWidth=".4">HD</text>
          </S>
        </Slot>
        <HostTray $ml={9}>
          <TrayIcon $w={23}><S w={13} h={8}><path d="m.700 7.300 5.800-6 5.800 6" stroke="#fff" strokeWidth="1.300" /></S></TrayIcon>
          <TrayIcon $w={24}><S w={17} h={14}><path d="M4.500 2.500h12v8h-12zM10.500 10.500v2.500M7 13.500h7M2.500 4v6.500H5" stroke="#fff" /><path d="M.500.500h4v3.500h-4z" stroke="#fff" /></S></TrayIcon>
          <TrayIcon $w={25}><S w={17} h={14}><path d="M.500 5h2.500l3-3v10L3 9H.500z" stroke="#fff" /><path d="M8.500 5q1.500 2 0 4M11 3q3 4 0 8M13.500 1.500q4.500 5.500 0 11" stroke="#fff" /></S></TrayIcon>
          <Clock $w={26} $lh={17} $s={11.5} $ls={-0.4}>POR<br />PTB</Clock>
          <Gap $w={10} />
          <Clock $w={62} $lh={18} $s={11.5} $ls={-0.4}>17:10<br />27/12/2019</Clock>
          <Gap $w={16} />
          <Notice>
            <S w={26} h={26}>
              <path d="M1 1h16v12H7l-3 4v-4H1z" fill="#fff" />
              <path d="M4 4.500h10M4 7h10M4 9.500h7" stroke="#333" />
              <circle cx="17" cy="16" r="7.500" fill="#3a3a3a" stroke="#a9a9a9" />
              <text x="17" y="20" textAnchor="middle" fontFamily="Open Sans, sans-serif" fontSize="11" fill="#fff">1</text>
            </S>
          </Notice>
        </HostTray>
        <PeekEdge />
      </Taskbar>
    </Screen>
  );
}

const AmountCell = styled.div`
  display: flex;
  justify-content: flex-end;
`;
